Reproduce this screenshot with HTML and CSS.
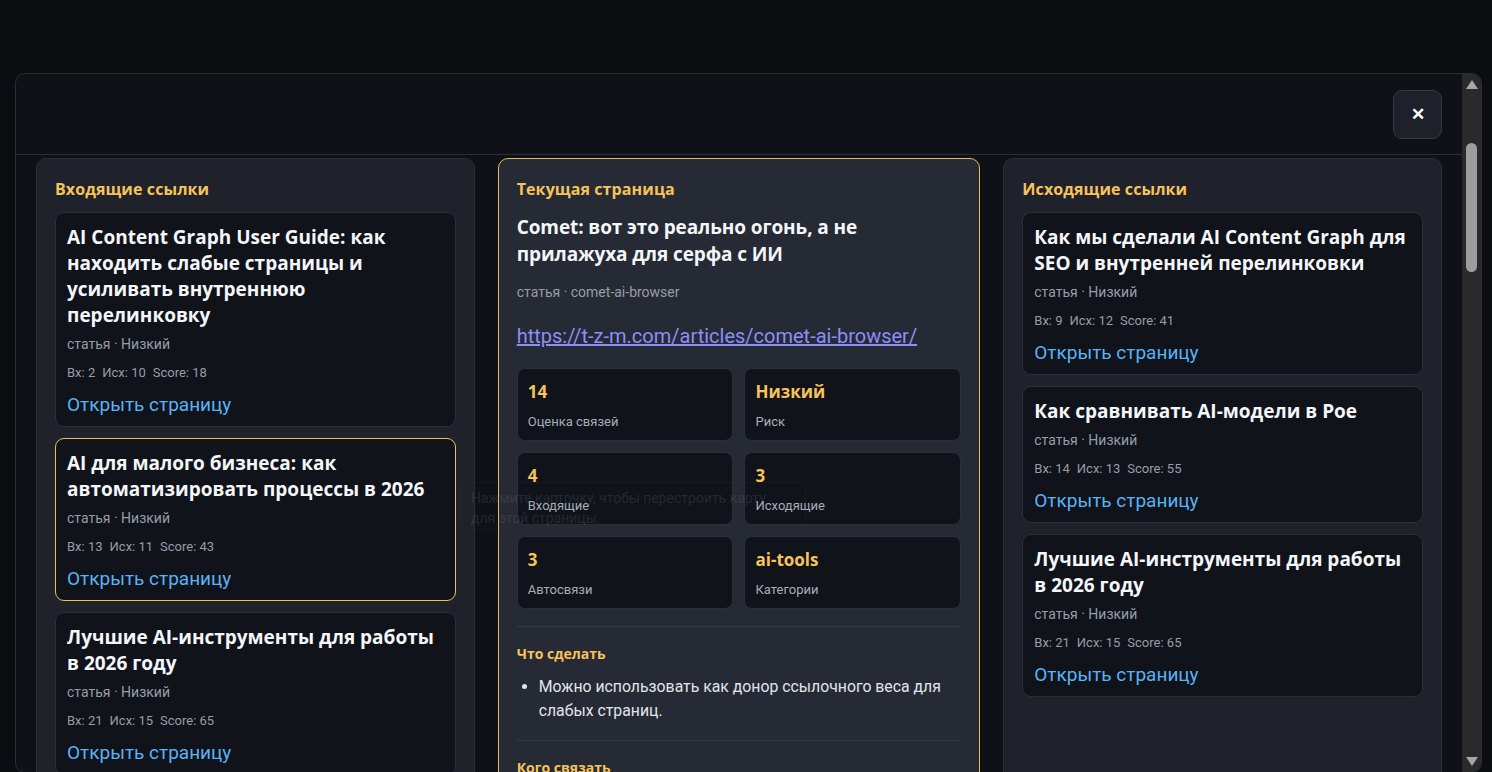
FILE: index.html
```html
<!DOCTYPE html>
<html lang="ru">
<head>
    <meta charset="UTF-8">
    <meta name="viewport" content="width=device-width, initial-scale=1.0">
    <title>Карта связей</title>
    <link rel="stylesheet" href="styles.css">
</head>
<body>
    <div class="modal">
        <div class="modal-main">
            <div class="modal-head">
                <button class="close-btn" type="button" aria-label="Закрыть">&#x2715;</button>
            </div>

            <div class="modal-body">
                <section class="panel">
                    <h3 class="panel-title">Входящие ссылки</h3>
                    <div class="card-list">
                        <div class="page-card">
                            <div class="card-title">AI Content Graph User Guide: как находить слабые страницы и усиливать внутреннюю перелинковку</div>
                            <div class="card-meta">статья · Низкий</div>
                            <div class="card-stats"><span>Вх: 2</span><span>Исх: 10</span><span>Score: 18</span></div>
                            <a class="card-link" href="#">Открыть страницу</a>
                        </div>
                        <div class="page-card active">
                            <div class="card-title">AI для малого бизнеса: как автоматизировать процессы в 2026</div>
                            <div class="card-meta">статья · Низкий</div>
                            <div class="card-stats"><span>Вх: 13</span><span>Исх: 11</span><span>Score: 43</span></div>
                            <a class="card-link" href="#">Открыть страницу</a>
                        </div>
                        <div class="page-card">
                            <div class="card-title">Лучшие AI-инструменты для работы в 2026 году</div>
                            <div class="card-meta">статья · Низкий</div>
                            <div class="card-stats"><span>Вх: 21</span><span>Исх: 15</span><span>Score: 65</span></div>
                            <a class="card-link" href="#">Открыть страницу</a>
                        </div>
                    </div>
                </section>

                <section class="panel current">
                    <h3 class="panel-title">Текущая страница</h3>
                    <h2 class="current-title">Comet: вот это реально огонь, а не прилажуха для серфа с ИИ</h2>
                    <div class="current-meta">статья · comet-ai-browser</div>
                    <a class="current-url" href="#">https://t-z-m.com/articles/comet-ai-browser/</a>

                    <div class="stat-grid">
                        <div class="stat"><b>14</b><span>Оценка связей</span></div>
                        <div class="stat"><b>Низкий</b><span>Риск</span></div>
                        <div class="stat"><b>4</b><span>Входящие</span></div>
                        <div class="stat"><b>3</b><span>Исходящие</span></div>
                        <div class="stat"><b>3</b><span>Автосвязи</span></div>
                        <div class="stat"><b>ai-tools</b><span>Категории</span></div>
                    </div>

                    <div class="block">
                        <h4>Что сделать</h4>
                        <ul>
                            <li>Можно использовать как донор ссылочного веса для слабых страниц.</li>
                        </ul>
                    </div>
                    <div class="block">
                        <h4>Кого связать</h4>
                        <ul>
                            <li>Лучшие AI-инструменты для работы в 2026 году</li>
                        </ul>
                    </div>
                </section>

                <section class="panel">
                    <h3 class="panel-title">Исходящие ссылки</h3>
                    <div class="card-list">
                        <div class="page-card">
                            <div class="card-title">Как мы сделали AI Content Graph для SEO и внутренней перелинковки</div>
                            <div class="card-meta">статья · Низкий</div>
                            <div class="card-stats"><span>Вх: 9</span><span>Исх: 12</span><span>Score: 41</span></div>
                            <a class="card-link" href="#">Открыть страницу</a>
                        </div>
                        <div class="page-card">
                            <div class="card-title">Как сравнивать AI-модели в Poe</div>
                            <div class="card-meta">статья · Низкий</div>
                            <div class="card-stats"><span>Вх: 14</span><span>Исх: 13</span><span>Score: 55</span></div>
                            <a class="card-link" href="#">Открыть страницу</a>
                        </div>
                        <div class="page-card">
                            <div class="card-title">Лучшие AI-инструменты для работы в 2026 году</div>
                            <div class="card-meta">статья · Низкий</div>
                            <div class="card-stats"><span>Вх: 21</span><span>Исх: 15</span><span>Score: 65</span></div>
                            <a class="card-link" href="#">Открыть страницу</a>
                        </div>
                    </div>
                </section>

                <div class="hint">Нажмите карточку, чтобы перестроить карту для этой страницы.</div>
            </div>
        </div>

        <div class="scrollbar">
            <div class="sb-arrow">
                <svg width="12" height="9" viewBox="0 0 12 9"><polygon points="6,0 12,9 0,9" fill="#a6a6a6"/></svg>
            </div>
            <div class="sb-track"><div class="sb-thumb"></div></div>
            <div class="sb-arrow down">
                <svg width="12" height="9" viewBox="0 0 12 9"><polygon points="0,0 12,0 6,9" fill="#a6a6a6"/></svg>
            </div>
        </div>
    </div>
</body>
</html>
```

FILE: styles.css
```css
:root {
    --page-bg: #0c0d10;
    --modal-bg: #0f1116;
    --line: #2a2d35;
    --panel-bg: #1f222a;
    --panel-hi: #262a34;
    --card-bg: #10131a;
    --card-line: #2b2f39;
    --gold: #f7c35b;
    --muted: #979da7;
    --text: #f4f6f9;
    --link: #5ab2f4;
    --url: #8d8ef6;
    --bar: #2a2a2a;
    --bold-font: "Open Sans", "Noto Sans", sans-serif;
}

* {
    box-sizing: border-box;
}

body {
    margin: 0;
    background: var(--page-bg);
    font-family: "Segoe UI", Roboto, "Noto Sans", sans-serif;
    color: var(--text);
    overflow: hidden;
}

.modal {
    margin: 73px 10px 0 15px;
    height: 700px;
    display: flex;
    background: var(--modal-bg);
    border: 1px solid var(--line);
    border-radius: 10px;
    overflow: hidden;
}

.modal-main {
    flex: 1;
    min-width: 0;
    display: flex;
    flex-direction: column;
}

/* scrollbar */
.scrollbar {
    width: 19px;
    flex-shrink: 0;
    display: flex;
    flex-direction: column;
    background: var(--bar);
}

.sb-arrow {
    height: 17px;
    display: flex;
    justify-content: center;
    padding-top: 6px;
}

.sb-arrow.down {
    padding-top: 0;
    align-items: flex-end;
    padding-bottom: 6px;
    height: 23px;
}

.sb-track {
    flex: 1;
    padding-top: 52px;
}

.sb-thumb {
    width: 11px;
    height: 129px;
    margin: 0 auto;
    border-radius: 6px;
    background: #9d9d9d;
}

.modal-head {
    height: 81px;
    flex-shrink: 0;
    display: flex;
    align-items: center;
    justify-content: flex-end;
    padding: 0 20px;
    border-bottom: 1px solid var(--line);
}

.close-btn {
    width: 49px;
    height: 49px;
    border-radius: 9px;
    border: 1px solid #343842;
    background: #1e2129;
    color: #fff;
    font-size: 17px;
    font-weight: 700;
    cursor: pointer;
}

.modal-body {
    position: relative;
    flex: 1;
    display: grid;
    grid-template-columns: 1fr 1.1fr 1fr;
    gap: 23px;
    padding: 3px 20px 0;
}

.panel {
    background: var(--panel-bg);
    border: 1px solid var(--line);
    border-radius: 10px;
    padding: 19px 18px 18px;
    margin-bottom: -40px;
}

.panel.current {
    background: var(--panel-hi);
    border-color: #e4ba5c;
}

.panel-title {
    margin: 0 0 12px;
    font-family: var(--bold-font);
    font-size: 16px;
    line-height: 22px;
    font-weight: 700;
    letter-spacing: 0.1px;
    color: var(--gold);
}

.card-list {
    display: flex;
    flex-direction: column;
    gap: 11px;
}

.page-card {
    background: var(--card-bg);
    border: 1px solid var(--card-line);
    border-radius: 9px;
    padding: 11px 11px 8px;
}

.page-card.active {
    border-color: #e9bf5f;
}

.card-title {
    font-family: var(--bold-font);
    font-size: 19px;
    line-height: 26px;
    font-weight: 700;
}

.card-meta {
    margin-top: 6px;
    font-size: 14px;
    line-height: 20px;
    color: var(--muted);
}

.card-stats {
    margin-top: 10px;
    display: flex;
    gap: 7px;
    font-size: 13px;
    line-height: 18px;
    color: var(--muted);
}

.card-link {
    display: block;
    margin-top: 10px;
    font-size: 19px;
    line-height: 26px;
    color: var(--link);
    text-decoration: none;
}

.current-title {
    margin: 14px 0 0;
    font-family: var(--bold-font);
    font-size: 19px;
    line-height: 27px;
    font-weight: 700;
    letter-spacing: -0.1px;
}

.current-meta {
    margin-top: 14px;
    font-size: 14px;
    line-height: 20px;
    color: var(--muted);
}

.current-url {
    display: inline-block;
    margin-top: 21px;
    font-size: 20px;
    line-height: 26px;
    color: var(--url);
}

.stat-grid {
    margin-top: 19px;
    display: grid;
    grid-template-columns: 1fr 1fr;
    gap: 11px;
}

.stat {
    height: 73px;
    background: var(--card-bg);
    border: 1px solid var(--card-line);
    border-radius: 8px;
    padding: 12px 10px;
    display: flex;
    flex-direction: column;
}

.stat b {
    font-family: var(--bold-font);
    font-size: 17px;
    line-height: 22px;
    color: var(--gold);
}

.stat span {
    margin-top: 10px;
    font-size: 13px;
    line-height: 18px;
    color: #a7aeb9;
}

.block {
    margin-top: 17px;
    padding-top: 16px;
    border-top: 1px solid #353944;
}

.block h4 {
    margin: 0;
    font-family: var(--bold-font);
    font-size: 14px;
    line-height: 22px;
    font-weight: 700;
    color: var(--gold);
}

.block ul {
    margin: 10px 0 0;
    padding-left: 22px;
    font-size: 15.8px;
    line-height: 24px;
    color: #e1e5eb;
}

.hint {
    position: absolute;
    left: 442px;
    top: 327px;
    width: 348px;
    height: 48px;
    padding: 5px 12px;
    font-size: 14px;
    line-height: 20px;
    color: #a0a6b0;
    border: 1px solid #3a3f4a;
    border-radius: 8px;
    opacity: 0.14;
    pointer-events: none;
}
```
